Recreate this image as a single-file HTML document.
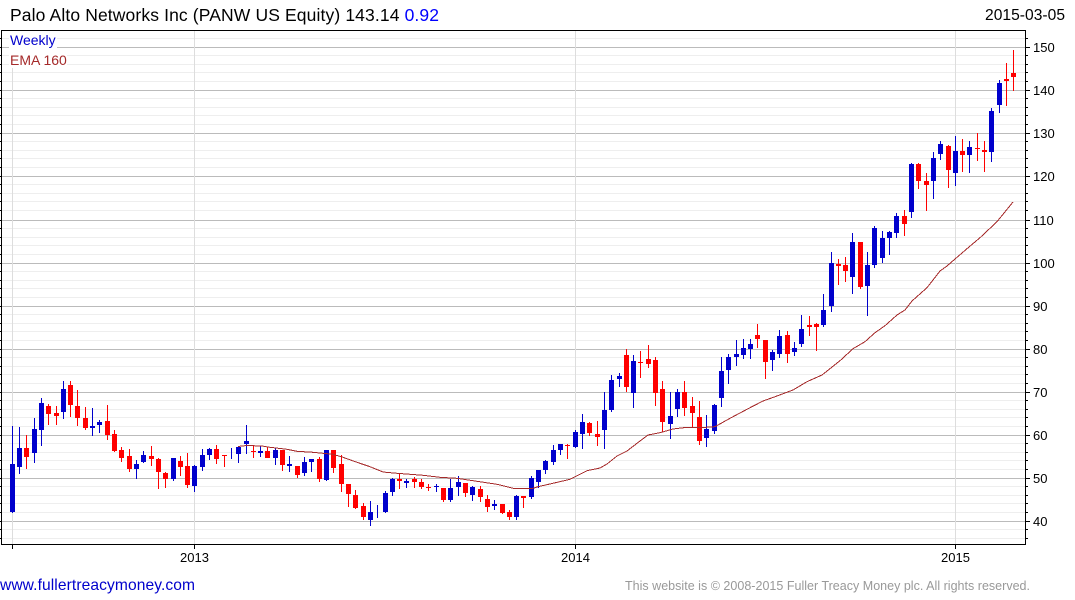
<!DOCTYPE html>
<html><head><meta charset="utf-8"><title>PANW</title>
<style>html,body{margin:0;padding:0;background:#fff;width:1075px;height:600px;overflow:hidden}svg{display:block}text{font-family:"Liberation Sans",Arial,sans-serif}</style>
</head><body>
<svg width="1075" height="600" viewBox="0 0 1075 600" xmlns="http://www.w3.org/2000/svg">
<rect width="1075" height="600" fill="#fff"/>
<g shape-rendering="crispEdges">
<path fill="#eee" d="M2 38H1025V39H2zM2 55H1025V56H2zM2 64H1025V65H2zM2 72H1025V73H2zM2 81H1025V82H2zM2 98H1025V99H2zM2 107H1025V108H2zM2 115H1025V116H2zM2 124H1025V125H2zM2 141H1025V142H2zM2 150H1025V151H2zM2 158H1025V159H2zM2 167H1025V168H2zM2 184H1025V185H2zM2 193H1025V194H2zM2 201H1025V202H2zM2 210H1025V211H2zM2 228H1025V229H2zM2 237H1025V238H2zM2 245H1025V246H2zM2 254H1025V255H2zM2 271H1025V272H2zM2 280H1025V281H2zM2 288H1025V289H2zM2 297H1025V298H2zM2 314H1025V315H2zM2 323H1025V324H2zM2 331H1025V332H2zM2 340H1025V341H2zM2 357H1025V358H2zM2 366H1025V367H2zM2 374H1025V375H2zM2 383H1025V384H2zM2 400H1025V401H2zM2 409H1025V410H2zM2 417H1025V418H2zM2 426H1025V427H2zM2 443H1025V444H2zM2 452H1025V453H2zM2 460H1025V461H2zM2 469H1025V470H2zM2 486H1025V487H2zM2 495H1025V496H2zM2 503H1025V504H2zM2 512H1025V513H2zM2 529H1025V530H2zM2 538H1025V539H2z"/>
<path fill="#bbb" d="M2 47H1025V48H2zM2 90H1025V91H2zM2 133H1025V134H2zM2 176H1025V177H2zM2 220H1025V221H2zM2 263H1025V264H2zM2 306H1025V307H2zM2 349H1025V350H2zM2 392H1025V393H2zM2 435H1025V436H2zM2 478H1025V479H2zM2 521H1025V522H2z"/>
<path fill="#ddd" d="M12 31H13V544H12zM194 31H195V544H194zM575 31H576V544H575zM955 31H956V544H955z"/>
<rect x="9" y="31" width="48" height="17" fill="#fff"/>
<rect x="9" y="48" width="58" height="20" fill="#fff"/>
<path fill="#0000cc" d="M12 426H13V513H12zM10 464H15V512H10zM19 427H20V474H19zM17 448H22V467H17zM34 418H35V463H34zM32 429H37V453H32zM41 398H42V446H41zM39 403H44V430H39zM63 381H64V419H63zM61 389H66V412H61zM92 408H93V436H92zM90 426H95V428H90zM99 420H100V433H99zM97 422H102V425H97zM136 460H137V479H136zM134 464H139V469H134zM143 451H144V463H143zM141 455H146V462H141zM173 458H174V481H173zM171 458H176V479H171zM194 465H195V492H194zM192 466H197V486H192zM202 449H203V471H202zM200 455H205V467H200zM209 448H210V460H209zM207 449H212V455H207zM231 448H232V459H231zM238 447H239V463H238zM236 447H241V454H236zM246 425H247V454H246zM244 441H249V444H244zM260 446H261V457H260zM258 451H263V453H258zM275 448H276V465H275zM273 450H278V458H273zM289 456H290V472H289zM287 464H292V466H287zM304 457H305V476H304zM302 462H307V473H302zM311 459H312V472H311zM309 459H314V462H309zM326 450H327V481H326zM324 450H329V480H324zM370 501H371V526H370zM368 512H373V520H368zM377 505H378V518H377zM385 491H386V513H385zM383 493H388V512H383zM392 478H393V496H392zM390 479H395V492H390zM406 479H407V488H406zM404 481H409V483H404zM436 484H437V492H436zM434 486H439V487H434zM450 479H451V502H450zM448 488H453V500H448zM458 476H459V496H458zM456 482H461V487H456zM472 486H473V501H472zM470 487H475V495H470zM494 500H495V510H494zM492 504H497V506H492zM516 495H517V520H516zM514 496H519V517H514zM531 476H532V499H531zM529 478H534V497H529zM538 470H539V488H538zM536 470H541V482H536zM545 460H546V474H545zM543 461H548V470H543zM553 445H554V465H553zM551 450H556V462H551zM560 444H561V455H560zM558 444H563V450H558zM575 430H576V448H575zM573 432H578V447H573zM582 414H583V449H582zM580 422H585V434H580zM604 392H605V449H604zM602 410H607V430H602zM611 375H612V412H611zM609 380H614V410H609zM619 373H620V387H619zM617 376H622V379H617zM633 355H634V408H633zM631 361H636V393H631zM670 392H671V439H670zM668 416H673V424H668zM677 389H678V417H677zM675 392H680V409H675zM706 415H707V447H706zM704 429H709V438H704zM714 404H715V434H714zM712 405H717V431H712zM721 357H722V407H721zM719 371H724V398H719zM728 354H729V384H728zM726 357H731V370H726zM736 340H737V366H736zM734 354H739V357H734zM743 339H744V359H743zM741 348H746V355H741zM750 339H751V359H750zM748 344H753V349H748zM772 350H773V371H772zM770 352H775V360H770zM779 330H780V358H779zM777 336H782V354H777zM794 342H795V356H794zM792 348H797V352H792zM801 315H802V347H801zM799 329H804V344H799zM823 294H824V327H823zM821 310H826V325H821zM831 252H832V312H831zM829 263H834V306H829zM852 233H853V294H852zM850 242H855V277H850zM867 252H868V316H867zM865 265H870V286H865zM874 226H875V268H874zM872 228H877V265H872zM882 231H883V263H882zM880 238H885V258H880zM889 231H890V255H889zM887 232H892V238H887zM896 213H897V238H896zM894 216H899V233H894zM911 163H912V218H911zM909 164H914V212H909zM933 152H934V199H933zM931 158H936V181H931zM940 141H941V160H940zM938 144H943V154H938zM955 136H956V186H955zM953 151H958V173H953zM969 141H970V173H969zM967 147H972V155H967zM991 108H992V162H991zM989 111H994V152H989zM999 80H1000V113H999zM997 83H1002V105H997z"/>
<path fill="#ff0000" d="M26 435H27V469H26zM24 448H29V457H24zM48 404H49V425H48zM46 406H51V414H46zM56 406H57V425H56zM54 413H59V416H54zM70 381H71V417H70zM68 385H73V405H68zM77 390H78V426H77zM75 406H80V418H75zM85 407H86V430H85zM83 418H88V428H83zM107 405H108V440H107zM105 421H110V435H105zM114 430H115V452H114zM112 434H117V451H112zM121 447H122V462H121zM119 450H124V458H119zM129 449H130V472H129zM127 456H132V469H127zM151 446H152V466H151zM149 456H154V459H149zM158 458H159V489H158zM156 459H161V472H156zM165 472H166V488H165zM163 473H168V479H163zM180 456H181V476H180zM178 461H183V467H178zM187 453H188V488H187zM185 466H190V485H185zM216 445H217V464H216zM214 449H219V459H214zM224 455H225V467H224zM222 455H227V456H222zM253 446H254V458H253zM251 451H256V452H251zM267 447H268V458H267zM265 451H270V458H265zM282 450H283V471H282zM280 450H285V465H280zM297 466H298V478H297zM295 466H300V475H295zM319 457H320V482H319zM317 459H322V479H317zM333 450H334V473H333zM331 450H336V468H331zM341 455H342V492H341zM339 464H344V484H339zM348 484H349V507H348zM346 484H351V494H346zM355 490H356V509H355zM353 495H358V508H353zM363 503H364V520H363zM361 506H366V517H361zM399 474H400V489H399zM397 479H402V481H397zM414 477H415V488H414zM412 479H417V482H412zM421 479H422V489H421zM419 482H424V487H419zM428 484H429V491H428zM426 487H431V488H426zM443 488H444V502H443zM441 488H446V500H441zM465 483H466V497H465zM463 483H468V493H463zM480 486H481V502H480zM478 489H483V497H478zM487 495H488V512H487zM485 499H490V507H485zM502 504H503V514H502zM500 504H505V513H500zM509 510H510V520H509zM507 512H512V517H507zM523 496H524V508H523zM521 496H526V498H521zM567 444H568V459H567zM565 445H570V446H565zM589 422H590V436H589zM587 423H592V433H587zM597 421H598V446H597zM595 434H600V437H595zM626 349H627V392H626zM624 355H629V387H624zM640 351H641V378H640zM638 362H643V363H638zM648 345H649V368H648zM646 359H651V364H646zM655 357H656V406H655zM653 360H658V393H653zM662 381H663V432H662zM660 389H665V422H660zM684 381H685V416H684zM682 392H687V408H682zM692 397H693V428H692zM690 406H695V413H690zM699 401H700V445H699zM697 417H702V441H697zM757 324H758V348H757zM755 335H760V339H755zM765 340H766V379H765zM763 340H768V362H763zM787 331H788V363H787zM785 335H790V354H785zM809 316H810V336H809zM807 325H812V327H807zM816 323H817V351H816zM814 324H819V327H814zM838 259H839V285H838zM836 264H841V266H836zM845 257H846V282H845zM843 265H848V271H843zM860 242H861V289H860zM858 242H863V287H858zM904 210H905V236H904zM902 216H907V224H902zM918 163H919V189H918zM916 164H921V181H916zM926 173H927V211H926zM924 181H929V185H924zM948 145H949V188H948zM946 146H951V170H946zM962 139H963V172H962zM960 151H965V155H960zM977 133H978V161H977zM975 148H980V149H975zM984 141H985V172H984zM982 150H987V152H982zM1006 63H1007V106H1006zM1004 79H1009V81H1004zM1013 50H1014V91H1013zM1011 73H1016V77H1011z"/>
<polyline fill="none" stroke="#a52a2a" stroke-width="1" points="238,446.5 247,445.5 262,446 270,447.3 287,449.3 297,451.3 313,452.3 323,453.3 333,454.3 343,457.3 357,462.3 370,466.7 383,472 397,473.3 410,474.3 423,475.3 440,477.3 457,478.3 477,481.3 497,484.3 513,488.3 533,488.3 538,486.7 553,483.3 570,479.3 587,470.7 600,468 607,464 617,456 627,451 637,443.3 648,435 660,432.7 673,429 687,427.3 700,427.7 715,426.7 730,418.3 750,407.7 763,401 777,396 793,390 807,381.7 822,375 840,360.7 853,348.7 865,341.7 875,332.7 885,325.7 897,315 905,310 912,301 927,287.7 940,271 947,266 955,259 967,248.7 980,237.7 997,221.7 1013,202"/>
<path fill="#000" d="M1 30H1026V31H1zM1 30H2V545H1zM1 544H1026V545H1zM1025 30H1026V545H1025zM12 545H13V549H12zM194 545H195V549H194zM575 545H576V549H575zM955 545H956V549H955z"/>
<path fill="#000" d="M0 38H1V39H0zM0 47H1V48H0zM0 55H1V56H0zM0 64H1V65H0zM0 72H1V73H0zM0 81H1V82H0zM0 90H1V91H0zM0 98H1V99H0zM0 107H1V108H0zM0 115H1V116H0zM0 124H1V125H0zM0 133H1V134H0zM0 141H1V142H0zM0 150H1V151H0zM0 158H1V159H0zM0 167H1V168H0zM0 176H1V177H0zM0 184H1V185H0zM0 193H1V194H0zM0 201H1V202H0zM0 210H1V211H0zM0 220H1V221H0zM0 228H1V229H0zM0 237H1V238H0zM0 245H1V246H0zM0 254H1V255H0zM0 263H1V264H0zM0 271H1V272H0zM0 280H1V281H0zM0 288H1V289H0zM0 297H1V298H0zM0 306H1V307H0zM0 314H1V315H0zM0 323H1V324H0zM0 331H1V332H0zM0 340H1V341H0zM0 349H1V350H0zM0 357H1V358H0zM0 366H1V367H0zM0 374H1V375H0zM0 383H1V384H0zM0 392H1V393H0zM0 400H1V401H0zM0 409H1V410H0zM0 417H1V418H0zM0 426H1V427H0zM0 435H1V436H0zM0 443H1V444H0zM0 452H1V453H0zM0 460H1V461H0zM0 469H1V470H0zM0 478H1V479H0zM0 486H1V487H0zM0 495H1V496H0zM0 503H1V504H0zM0 512H1V513H0zM0 521H1V522H0zM0 529H1V530H0zM0 538H1V539H0z"/>
<path fill="#000" d="M1026 38H1028V39H1026zM1026 47H1030V48H1026zM1026 55H1028V56H1026zM1026 64H1028V65H1026zM1026 72H1028V73H1026zM1026 81H1028V82H1026zM1026 90H1030V91H1026zM1026 98H1028V99H1026zM1026 107H1028V108H1026zM1026 115H1028V116H1026zM1026 124H1028V125H1026zM1026 133H1030V134H1026zM1026 141H1028V142H1026zM1026 150H1028V151H1026zM1026 158H1028V159H1026zM1026 167H1028V168H1026zM1026 176H1030V177H1026zM1026 184H1028V185H1026zM1026 193H1028V194H1026zM1026 201H1028V202H1026zM1026 210H1028V211H1026zM1026 220H1030V221H1026zM1026 228H1028V229H1026zM1026 237H1028V238H1026zM1026 245H1028V246H1026zM1026 254H1028V255H1026zM1026 263H1030V264H1026zM1026 271H1028V272H1026zM1026 280H1028V281H1026zM1026 288H1028V289H1026zM1026 297H1028V298H1026zM1026 306H1030V307H1026zM1026 314H1028V315H1026zM1026 323H1028V324H1026zM1026 331H1028V332H1026zM1026 340H1028V341H1026zM1026 349H1030V350H1026zM1026 357H1028V358H1026zM1026 366H1028V367H1026zM1026 374H1028V375H1026zM1026 383H1028V384H1026zM1026 392H1030V393H1026zM1026 400H1028V401H1026zM1026 409H1028V410H1026zM1026 417H1028V418H1026zM1026 426H1028V427H1026zM1026 435H1030V436H1026zM1026 443H1028V444H1026zM1026 452H1028V453H1026zM1026 460H1028V461H1026zM1026 469H1028V470H1026zM1026 478H1030V479H1026zM1026 486H1028V487H1026zM1026 495H1028V496H1026zM1026 503H1028V504H1026zM1026 512H1028V513H1026zM1026 521H1030V522H1026zM1026 529H1028V530H1026zM1026 538H1028V539H1026z"/>
</g>
<text x="10" y="21" font-size="17.5" fill="#000" textLength="429" lengthAdjust="spacing">Palo Alto Networks Inc (PANW US Equity) 143.14 <tspan fill="#0000ff">0.92</tspan></text>
<text x="985" y="20" font-size="15.6" fill="#000" textLength="80" lengthAdjust="spacing">2015-03-05</text>
<text x="10" y="45" font-size="14" fill="#0000cc">Weekly</text>
<text x="10" y="65" font-size="14" fill="#a52a2a">EMA 160</text>
<g font-size="13" fill="#000">
<text x="1033" y="52">150</text><text x="1033" y="95">140</text><text x="1033" y="138">130</text><text x="1033" y="181">120</text><text x="1033" y="225">110</text><text x="1033" y="268">100</text><text x="1033" y="311">90</text><text x="1033" y="354">80</text><text x="1033" y="397">70</text><text x="1033" y="440">60</text><text x="1033" y="483">50</text><text x="1033" y="526">40</text>
<text x="180" y="562">2013</text><text x="561" y="562">2014</text><text x="941" y="562">2015</text>
</g>
<text x="0" y="590" font-size="15.6" fill="#0000cc" textLength="195" lengthAdjust="spacing">www.fullertreacymoney.com</text>
<text x="625" y="590" font-size="12.5" fill="#999" textLength="405" lengthAdjust="spacing">This website is © 2008-2015 Fuller Treacy Money plc. All rights reserved.</text>
</svg>
</body></html>
